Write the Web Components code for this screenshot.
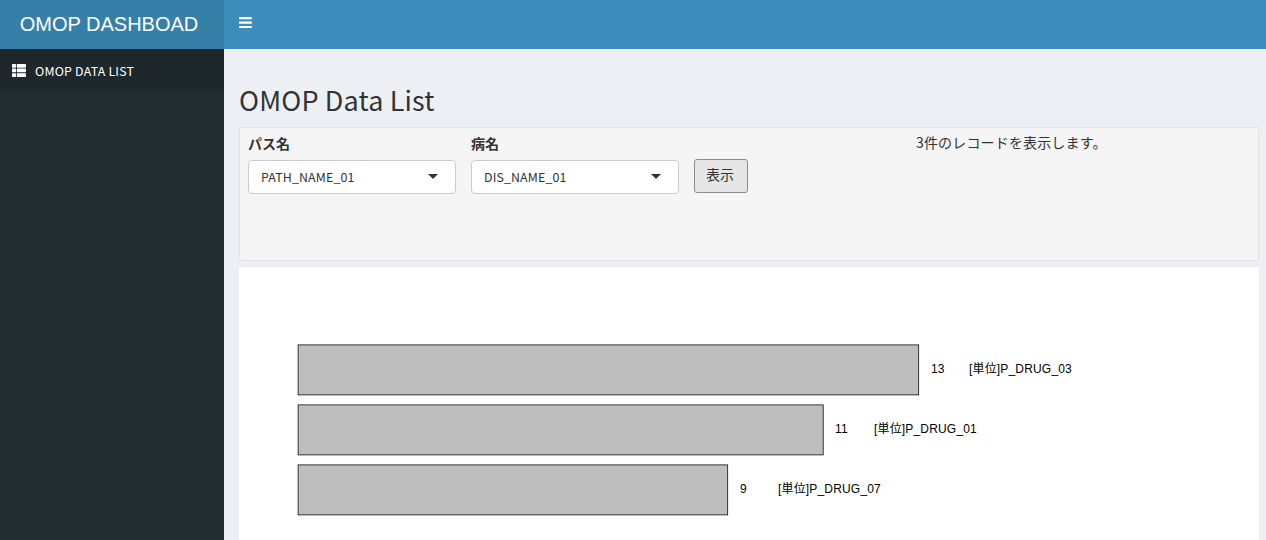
<!DOCTYPE html>
<html lang="ja">
<head>
<meta charset="utf-8">
<title>OMOP DASHBOAD</title>
<style>
html,body{margin:0;height:100%;overflow:hidden}
body{font-family:"Noto Sans CJK JP",sans-serif;font-size:14px;line-height:20px;color:#333;background:#ecf0f5}
</style>
</head>
<body>
<omop-app></omop-app>
<script>
const define = (name, html) => customElements.define(name, class extends HTMLElement {
  constructor() {
    super();
    this.attachShadow({mode: 'open'}).innerHTML = html;
  }
});

define('app-header', `<style>
:host{display:flex;height:49px;flex:none;background:#3c8dbc;color:#fff}
.logo{width:224px;box-sizing:border-box;padding-right:6px;background:#367fa9;text-align:center;font:20px/48px "Liberation Sans",Arial,sans-serif;white-space:nowrap}
.toggle{padding:17px 15px;height:12px}
svg{display:block}
</style><div class="logo"><slot></slot></div>
<div class="toggle"><svg width="13" height="12" fill="#fff"><rect width="12.8" height="2.2" rx=".4"/><rect y="4.6" width="12.8" height="2.2" rx=".4"/><rect y="9" width="12.8" height="2.1" rx=".4"/></svg></div>`);

define('side-menu', `<style>
:host{display:block;width:224px;flex:none;background:#222d32}
.item{display:flex;align-items:center;height:44px;box-sizing:border-box;padding-left:12px;background:#1e282c;color:#fff;font-size:12.4px;letter-spacing:.2px;white-space:nowrap}
svg{margin:0 9px 2px 0;flex:none}
</style><div class="item"><svg width="14" height="13" fill="#fff"><rect width="4" height="3.7" rx=".6"/><rect x="4.8" width="9.2" height="3.7" rx=".6"/><rect y="4.6" width="4" height="3.7" rx=".6"/><rect x="4.8" y="4.6" width="9.2" height="3.7" rx=".6"/><rect y="9.2" width="4" height="3.7" rx=".6"/><rect x="4.8" y="9.2" width="9.2" height="3.7" rx=".6"/></svg><slot></slot></div>`);

define('select-field', `<style>
:host{display:block;width:208px}
.label{font-weight:700;height:20px;margin-bottom:7px}
.box{display:flex;align-items:center;justify-content:space-between;height:34px;box-sizing:border-box;border:1px solid #ccc;border-radius:4px;background:#fff;padding:0 17px 0 12px;font-size:12.4px;letter-spacing:.14px}
svg{margin-bottom:1px}
</style><div class="label"><slot name="label"></slot></div><div class="box"><span><slot></slot></span><svg width="10" height="5"><path d="M0 0h10L5 5z" fill="#333"/></svg></div>`);

define('action-button', `<style>
:host{display:block}
button{display:block;box-sizing:border-box;width:54px;height:34px;padding:0 2px 4px 0;border:1px solid #8c8c8c;border-radius:3px;background:#e6e6e6;color:#333;font:inherit}
</style><button><slot></slot></button>`);

define('filter-panel', `<style>
:host{display:grid;grid-template-columns:208px 208px 54px 1fr;column-gap:15px;box-sizing:border-box;height:134px;padding:5px 8px;border:1px solid #e1e3e5;border-radius:2px;background:#f5f5f5;align-items:start}
action-button{margin-top:26px}
.msg{padding-left:153px;margin-top:-1px;letter-spacing:.16px}
</style><select-field><span slot="label">パス名</span>PATH_NAME_01</select-field>
<select-field><span slot="label">病名</span>DIS_NAME_01</select-field>
<action-button>表示</action-button><div class="msg">3件のレコードを表示します。</div>`);

customElements.define('bar-chart', class extends HTMLElement {
  constructor() {
    super();
    const rows = [
      {y: 77.9, w: 620.6, n: 13, tx: 692, lx: 730, name: '[単位]P_DRUG_03'},
      {y: 137.9, w: 525.1, n: 11, tx: 596, lx: 635, name: '[単位]P_DRUG_01'},
      {y: 197.9, w: 429.6, n: 9, tx: 501, lx: 539, name: '[単位]P_DRUG_07'}
    ];
    this.attachShadow({mode: 'open'}).innerHTML = `<style>
:host{display:block;background:#fff;height:400px}
svg{display:block}
text{font:12px "Liberation Sans","Noto Sans CJK JP",sans-serif;letter-spacing:.17px;fill:#000}
</style><svg width="1020" height="400">` + rows.map(r =>
      `<rect x="59.1" y="${r.y}" width="${r.w}" height="50" fill="#bebebe" stroke="#000" stroke-width=".75"/>
<text x="${r.tx}" y="${r.y + 28.1}">${r.n}</text><text x="${r.lx}" y="${r.y + 28.1}">${r.name}</text>`).join('') + `</svg>`;
  }
});

define('omop-app', `<style>
:host{display:flex;flex-direction:column;height:100vh}
.body{display:flex;flex:1;min-height:0}
main{flex:1;padding:34px 7px 0 15px;overflow:hidden}
h2{margin:0 0 11px;font-size:27px;letter-spacing:.14px;line-height:33px;font-weight:400;white-space:nowrap}
bar-chart{margin-top:6px}
</style><app-header>OMOP DASHBOAD</app-header>
<div class="body"><side-menu>OMOP DATA LIST</side-menu>
<main><h2>OMOP Data List</h2><filter-panel></filter-panel><bar-chart></bar-chart></main></div>`);
</script>
</body>
</html>
